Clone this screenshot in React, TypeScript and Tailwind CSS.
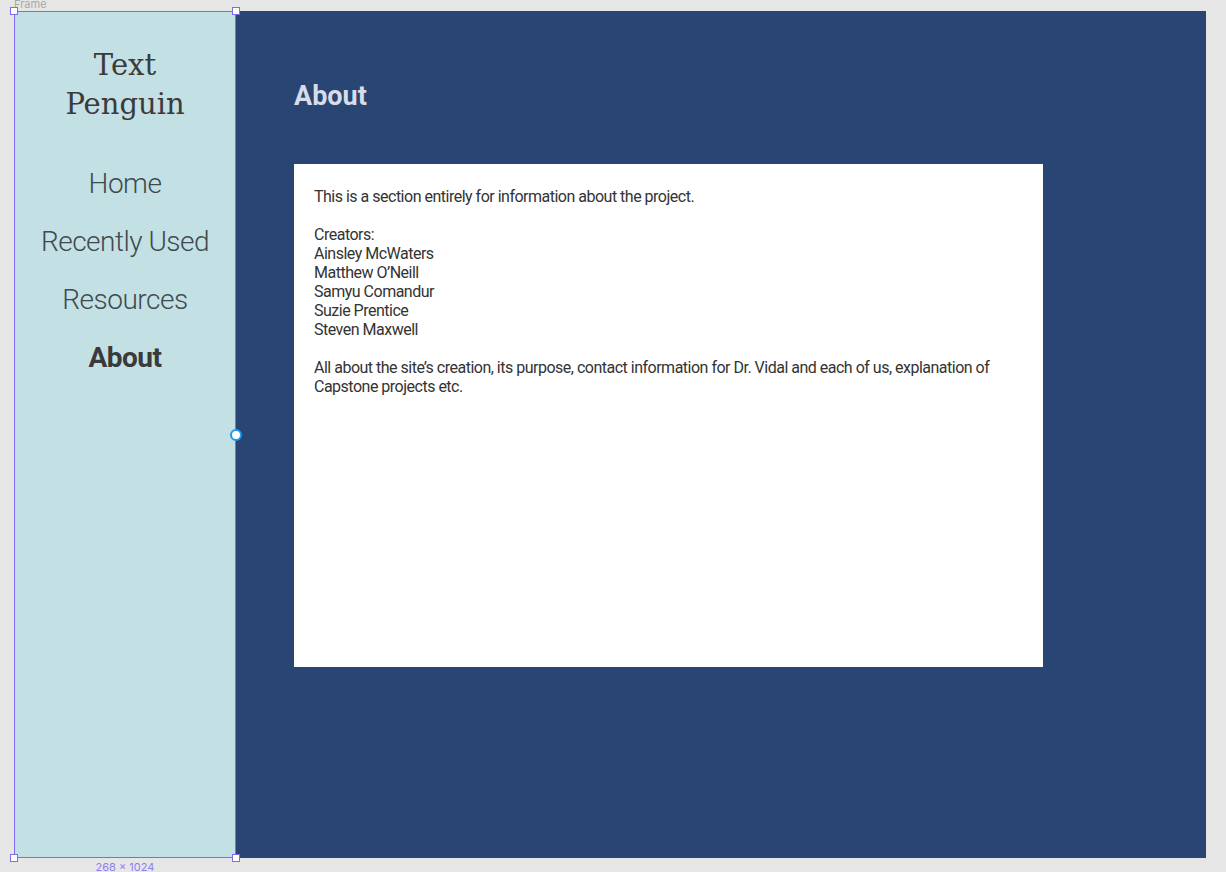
const navItems = [
  { label: "Home", active: false },
  { label: "Recently Used", active: false },
  { label: "Resources", active: false },
  { label: "About", active: true },
];

const creators = [
  "Ainsley McWaters",
  "Matthew O\u2019Neill",
  "Samyu Comandur",
  "Suzie Prentice",
  "Steven Maxwell",
];

const Handle = ({ className }: { className: string }) => (
  <div
    className={`absolute h-[8px] w-[8px] border border-[#7b6cf0] bg-white ${className}`}
  />
);

const Sidebar = () => {
  return (
    <aside className="relative flex h-full w-[222px] shrink-0 flex-col items-center bg-[#c3e0e5] pt-[35px]">
      <h1 className="text-center font-['DejaVu_Serif',serif] text-[29px] leading-[39px] text-[#3b3b3b]">
        Text
        <br />
        Penguin
      </h1>
      <nav className="mt-[42px] flex flex-col items-center gap-[23px]">
        {navItems.map((item) => (
          <a
            key={item.label}
            className={`font-['Roboto',sans-serif] text-[28px] leading-[35px] tracking-[-0.5px] ${
              item.active
                ? "font-bold text-[#3a3a3a]"
                : "font-light text-[#3f4a4f]"
            }`}
          >
            {item.label}
          </a>
        ))}
      </nav>

      {/* selection outline */}
      <div className="pointer-events-none absolute inset-0 border border-[#7b6cf0]" />
      <Handle className="-left-[4px] -top-[4px]" />
      <Handle className="-right-[4px] -top-[4px]" />
      <Handle className="-bottom-[4px] -left-[4px]" />
      <Handle className="-bottom-[4px] -right-[4px]" />
      <div className="absolute -right-[6px] top-[418px] h-[12px] w-[12px] rounded-full border-[2px] border-[#1a9bf0] bg-white" />
      <span className="absolute -bottom-[17px] left-0 w-full text-center font-['Inter',sans-serif] text-[11px] text-[#8b7ff0]">
        268 × 1024
      </span>
    </aside>
  );
};

const Main = () => {
  return (
    <main className="flex h-full w-[970px] flex-col bg-[#284574] pl-[58px] pt-[67px]">
      <h2 className="font-['Roboto',sans-serif] text-[27px] font-bold leading-[36px] text-[#d8dce6]">
        About
      </h2>
      <section className="mt-[50px] h-[503px] w-[749px] bg-white px-[20px] pt-[23px] font-['Roboto',sans-serif] text-[16px] leading-[19px] tracking-[-0.5px] text-[#333333]">
        <p>This is a section entirely for information about the project.</p>
        <p className="mt-[19px]">
          Creators:
          {creators.map((c) => (
            <span key={c}>
              <br />
              {c}
            </span>
          ))}
        </p>
        <p className="mt-[19px] max-w-[690px]">
          All about the site’s creation, its purpose, contact information for
          Dr. Vidal and each of us, explanation of Capstone projects etc.
        </p>
      </section>
    </main>
  );
};

export default function App() {
  return (
    <div className="relative h-[872px] w-[1226px] overflow-hidden bg-[#e6e6e6]">
      <span className="absolute -top-[4px] left-[14px] font-['Inter',sans-serif] text-[11px] text-[#a8a8a8]">
        Frame
      </span>
      <div className="flex h-[858px] pl-[14px] pt-[11px]">
        <Sidebar />
        <Main />
      </div>
    </div>
  );
}
